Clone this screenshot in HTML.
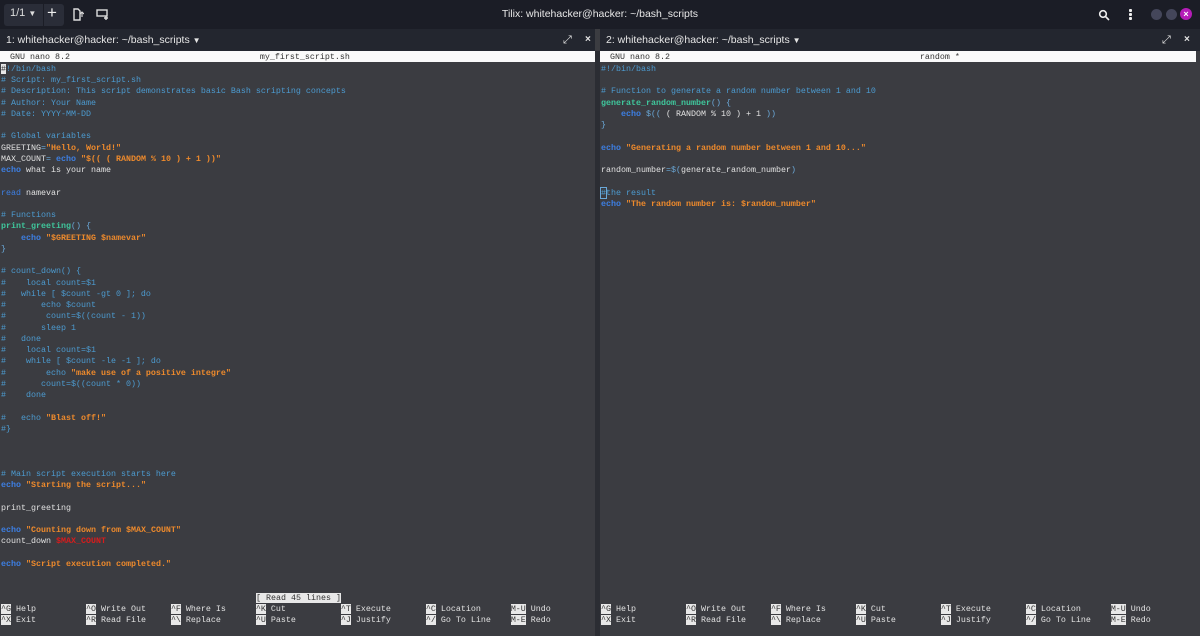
<!DOCTYPE html>
<html><head><meta charset="utf-8"><style>
*{margin:0;padding:0;box-sizing:border-box}
body{width:1200px;height:636px;overflow:hidden;background:#3b3c41;font-family:"Liberation Sans",sans-serif;position:relative}
.top{position:absolute;left:0;top:0;width:1200px;height:29px;background:#1b1d26}
.hdr{position:absolute;top:29px;height:22px;background:#23262f;color:#e6e6e6;font-size:10.5px;line-height:22px}
.pane{position:absolute;top:51px;height:585px;background:#3b3c41;overflow:hidden}
pre{font-family:"Liberation Mono",monospace;font-size:8.33px;line-height:11.25px;color:#e2e2e2;position:absolute;left:1px;top:63.8px;white-space:pre}
.nb{position:absolute;left:0;top:0;height:11.25px;background:#fafafa;color:#333;font-family:"Liberation Mono",monospace;font-size:8.33px;line-height:12px;white-space:pre}
.c{color:#4c9bd0}.s{color:#ee8a2c;font-weight:bold}.k{color:#3d7fe3;font-weight:bold}.f{color:#3fc79c;font-weight:bold}.p{color:#6aa8d8}.r{color:#d81c1c;font-weight:bold}
.inv{background:#e8e8e8;color:#333}
.bot{position:absolute;left:1px;font-family:"Liberation Mono",monospace;font-size:8.33px;line-height:11.25px;color:#e2e2e2;white-space:pre}
.div{position:absolute;left:595px;top:51px;width:5px;height:585px;background:#2b2d33}
</style></head><body>
<div class="top">
 <div style="position:absolute;left:4px;top:4px;width:60px;height:22px;background:#2a2d38;border-radius:3px"></div>
 <div style="position:absolute;left:43px;top:4px;width:1px;height:22px;background:#1b1d26"></div>
 <div style="position:absolute;left:10px;top:7px;color:#ddd;font-size:11px">1/1 <span style="font-size:8px">▼</span></div>
 <div style="position:absolute;left:47px;top:3px;color:#eee;font-size:17px">+</div>
 <svg style="position:absolute;left:72px;top:8px" width="12" height="13" viewBox="0 0 12 13" fill="none" stroke="#ddd" stroke-width="1.4"><path d="M2 1h4l2 2v9H2z"/><path d="M8 6l2-2 2 2M10 4v5" stroke-width="1.1"/></svg>
 <svg style="position:absolute;left:96px;top:9px" width="13" height="11" viewBox="0 0 13 11" fill="none" stroke="#ddd" stroke-width="1.4"><rect x="1" y="1" width="10" height="6"/><path d="M8 9h4M10 7v4"/></svg>
 <div style="position:absolute;left:0;width:1200px;top:8px;text-align:center;color:#e8e8e8;font-size:10.5px">Tilix: whitehacker@hacker: ~/bash_scripts</div>
 <svg style="position:absolute;left:1098px;top:9px" width="12" height="12" viewBox="0 0 12 12" fill="none" stroke="#eee" stroke-width="1.6"><circle cx="5" cy="5" r="3.3"/><path d="M7.5 7.5L11 11"/></svg>
 <div style="position:absolute;left:1129px;top:9px;width:2.5px;height:2.5px;background:#eee;box-shadow:0 4px #eee,0 8px #eee;border-radius:1px"></div>
 <div style="position:absolute;left:1151px;top:9px;width:11px;height:11px;border-radius:50%;background:#44465a"></div>
 <div style="position:absolute;left:1166px;top:9px;width:11px;height:11px;border-radius:50%;background:#44465a"></div>
 <div style="position:absolute;left:1180px;top:8px;width:12px;height:12px;border-radius:50%;background:#b51cb8;color:#fff;font-size:9px;line-height:12px;text-align:center;font-weight:bold">×</div>
</div>
<div class="hdr" style="left:0;width:595px;padding-left:6px">1: whitehacker@hacker: ~/bash_scripts <span style="font-size:8px">▼</span>
 <span style="position:absolute;left:563px;top:0;font-size:11px">⤢</span><span style="position:absolute;left:585px;top:0;font-size:10px;font-weight:bold">×</span></div>
<div class="hdr" style="left:600px;width:600px;padding-left:6px">2: whitehacker@hacker: ~/bash_scripts <span style="font-size:8px">▼</span>
 <span style="position:absolute;left:562px;top:0;font-size:11px">⤢</span><span style="position:absolute;left:584px;top:0;font-size:10px;font-weight:bold">×</span></div>
<div class="div"></div>
<div class="pane" style="left:0;width:595px">
<div class="nb" style="width:595px">  GNU nano 8.2                                      my_first_script.sh</div>
</div>
<div class="pane" style="left:600px;width:600px">
<div class="nb" style="width:596px">  GNU nano 8.2                                                  random *</div>
</div>
<pre><span class="inv">#</span><span class="c">!/bin/bash
# Script: my_first_script.sh
# Description: This script demonstrates basic Bash scripting concepts
# Author: Your Name
# Date: YYYY-MM-DD

# Global variables</span>
GREETING<span class="p">=</span><span class="s">"Hello, World!"</span>
MAX_COUNT<span class="p">=</span> <span class="k">echo</span> <span class="s">"$(( ( RANDOM % 10 ) + 1 ))"</span>
<span class="k">echo</span> what is your name

<span class="k" style="font-weight:normal">read</span> namevar

<span class="c"># Functions</span>
<span class="f">print_greeting</span><span class="p">() {</span>
    <span class="k">echo</span> <span class="s">"$GREETING $namevar"</span>
<span class="p">}</span>

<span class="c"># count_down() {
#    local count=$1
#   while [ $count -gt 0 ]; do
#       echo $count
#        count=$((count - 1))
#       sleep 1
#   done
#    local count=$1
#    while [ $count -le -1 ]; do
#        echo </span><span class="s">"make use of a positive integre"</span><span class="c">
#       count=$((count * 0))
#    done

#   echo </span><span class="s">"Blast off!"</span><span class="c">
#}</span>



<span class="c"># Main script execution starts here</span>
<span class="k">echo</span> <span class="s">"Starting the script..."</span>

print_greeting

<span class="k">echo</span> <span class="s">"Counting down from $MAX_COUNT"</span>
count_down <span class="r">$MAX_COUNT</span>

<span class="k">echo</span> <span class="s">"Script execution completed."</span></pre>
<pre style="left:601px"><span class="c">#!/bin/bash

# Function to generate a random number between 1 and 10</span>
<span class="f">generate_random_number</span><span class="p">() {</span>
    <span class="k">echo</span> <span class="p">$((</span> ( RANDOM % 10 ) + 1 <span class="p">))</span>
<span class="p">}</span>

<span class="k">echo</span> <span class="s">"Generating a random number between 1 and 10..."</span>

random_number<span class="p">=$(</span>generate_random_number<span class="p">)</span>

<span class="c"><span style="outline:1px solid #6aa8d8">#</span>the result</span>
<span class="k">echo</span> <span class="s">"The random number is: $random_number"</span></pre>
<div class="bot" style="top:592.6px;left:256px"><span class="inv">[ Read 45 lines ]</span></div>
<div class="bot" style="top:603.8px"><span class="inv">^G</span> Help          <span class="inv">^O</span> Write Out     <span class="inv">^F</span> Where Is      <span class="inv">^K</span> Cut           <span class="inv">^T</span> Execute       <span class="inv">^C</span> Location      <span class="inv">M-U</span> Undo</div>
<div class="bot" style="top:615px"><span class="inv">^X</span> Exit          <span class="inv">^R</span> Read File     <span class="inv">^\</span> Replace       <span class="inv">^U</span> Paste         <span class="inv">^J</span> Justify       <span class="inv">^/</span> Go To Line    <span class="inv">M-E</span> Redo</div>
<div class="bot" style="top:603.8px;left:601px"><span class="inv">^G</span> Help          <span class="inv">^O</span> Write Out     <span class="inv">^F</span> Where Is      <span class="inv">^K</span> Cut           <span class="inv">^T</span> Execute       <span class="inv">^C</span> Location      <span class="inv">M-U</span> Undo</div>
<div class="bot" style="top:615px;left:601px"><span class="inv">^X</span> Exit          <span class="inv">^R</span> Read File     <span class="inv">^\</span> Replace       <span class="inv">^U</span> Paste         <span class="inv">^J</span> Justify       <span class="inv">^/</span> Go To Line    <span class="inv">M-E</span> Redo</div>
</body></html>
